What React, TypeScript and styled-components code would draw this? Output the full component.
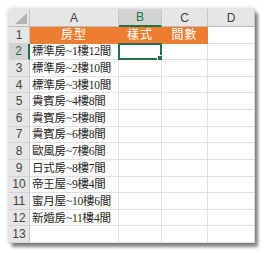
import React from 'react';
import styled, { createGlobalStyle } from 'styled-components';

const GlobalStyle = createGlobalStyle`
  html, body {
    margin: 0;
    padding: 0;
    background: #ffffff;
  }
`;

const Page = styled.div`
  width: 265px;
  height: 253px;
  padding: 9px 0 0 9px;
  box-sizing: border-box;
  background: #ffffff;
`;

const Sheet = styled.div`
  width: 246px;
  height: 234px;
  display: grid;
  grid-template-columns: 21px 89px 43px 46px 47px;
  grid-template-rows: 18px repeat(13, minmax(0, 1fr));
  background: #ffffff;
  box-shadow: 3px 4px 3px rgba(0, 0, 0, 0.45), 0 0 5px rgba(0, 0, 0, 0.25);
  font-family: "Liberation Sans", "Noto Sans CJK TC", sans-serif;
  line-height: 14px;
  overflow: hidden;
`;

const Corner = styled.div`
  background: #e6e6e6;
  border-right: 1px solid #c6c6c6;
  border-bottom: 1px solid #bdbdbd;
  display: flex;
  align-items: flex-end;
  justify-content: flex-end;
  padding: 0 2px 2px 0;
`;

const ColHead = styled.div<{ $active?: boolean }>`
  background: ${(p) => (p.$active ? '#d3d3d3' : '#e6e6e6')};
  color: ${(p) => (p.$active ? '#217346' : '#444444')};
  border-right: 1px solid #c6c6c6;
  border-bottom: ${(p) => (p.$active ? '2px solid #217346' : '1px solid #bdbdbd')};
  display: flex;
  align-items: center;
  justify-content: center;
  font-size: 12px;
`;

const RowHead = styled.div<{ $active?: boolean }>`
  background: ${(p) => (p.$active ? '#d3d3d3' : '#e6e6e6')};
  color: ${(p) => (p.$active ? '#217346' : '#444444')};
  border-right: ${(p) => (p.$active ? '2px solid #217346' : '1px solid #c6c6c6')};
  border-bottom: 1px solid #d4d4d4;
  display: flex;
  align-items: center;
  justify-content: center;
  font-size: 12px;
  min-height: 0;
`;

const Cell = styled.div<{ $fill?: boolean; $center?: boolean }>`
  position: relative;
  min-height: 0;
  background: ${(p) => (p.$fill ? '#ed7d31' : '#ffffff')};
  color: ${(p) => (p.$fill ? '#ffffff' : '#262626')};
  border-right: 1px solid ${(p) => (p.$fill ? '#ed7d31' : '#e0e0e0')};
  border-bottom: 1px solid ${(p) => (p.$fill ? '#ed7d31' : '#e0e0e0')};
  display: flex;
  align-items: center;
  justify-content: ${(p) => (p.$center ? 'center' : 'flex-start')};
  padding-left: ${(p) => (p.$center ? '0' : '2px')};
  font-family: "Liberation Serif", "Noto Sans CJK TC", serif;
  font-size: ${(p) => (p.$fill ? '12px' : '11.5px')};
  letter-spacing: ${(p) => (p.$fill ? '1px' : '-0.2px')};
  white-space: nowrap;
`;

const Selection = styled.div`
  position: absolute;
  left: -1px;
  top: -1px;
  right: -1px;
  bottom: -1px;
  border: 2px solid #217346;
`;

const Handle = styled.div`
  position: absolute;
  right: -4px;
  bottom: -4px;
  width: 5px;
  height: 5px;
  background: #217346;
  border: 1px solid #ffffff;
`;

const rooms = [
  '標準房~1樓12間',
  '標準房~2樓10間',
  '標準房~3樓10間',
  '貴賓房~4樓8間',
  '貴賓房~5樓8間',
  '貴賓房~6樓8間',
  '歐風房~7樓6間',
  '日式房~8樓7間',
  '帝王屋~9樓4間',
  '蜜月屋~10樓6間',
  '新婚房~11樓4間',
  '',
];

const columns = ['A', 'B', 'C', 'D'];

function App(): JSX.Element {
  return (
    <Page>
      <GlobalStyle />
      <Sheet>
        <Corner>
          <svg width="12" height="11" viewBox="0 0 12 11">
            <polygon points="12,0 12,11 0,11" fill="#b4b4b4" />
          </svg>
        </Corner>
        {columns.map((c) => (
          <ColHead key={c} $active={c === 'B'}>{c}</ColHead>
        ))}

        <RowHead>1</RowHead>
        <Cell $fill $center>房型</Cell>
        <Cell $fill $center>樣式</Cell>
        <Cell $fill $center>間數</Cell>
        <Cell />

        {rooms.map((name, i) => {
          const row = i + 2;
          return (
            <React.Fragment key={row}>
              <RowHead $active={row === 2}>{row}</RowHead>
              <Cell>{name}</Cell>
              <Cell>
                {row === 2 && (
                  <Selection>
                    <Handle />
                  </Selection>
                )}
              </Cell>
              <Cell />
              <Cell />
            </React.Fragment>
          );
        })}
      </Sheet>
    </Page>
  );
}

export default App;
